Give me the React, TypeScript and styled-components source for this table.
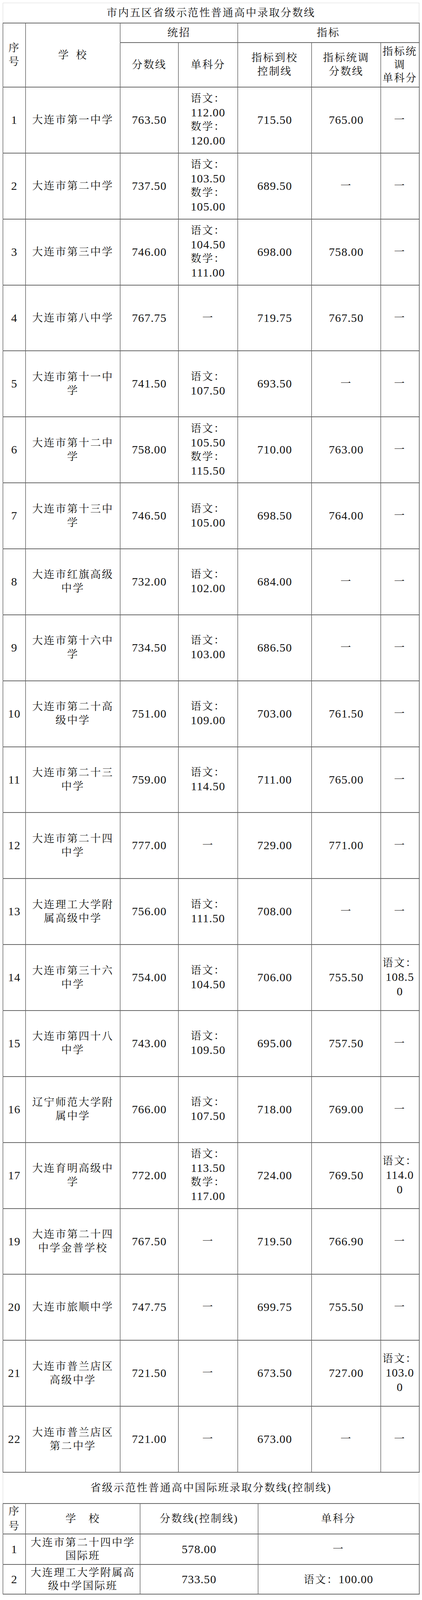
import React from "react";
import styled, { createGlobalStyle } from "styled-components";

const GlobalStyle = createGlobalStyle`
  html, body {
    margin: 0;
    padding: 0;
    background: #ffffff;
  }
  body {
    font-family: "Liberation Serif", "Noto Serif CJK SC", "Noto Sans CJK SC", serif;
    color: #111111;
  }
`;

const Page = styled.div`
  width: 1080px;
  box-sizing: border-box;
  padding: 7px 8px 9px 7px;
  font-size: 27px;
  letter-spacing: 2.7px;
`;

const Table = styled.table`
  width: 1065px;
  border-collapse: collapse;
  table-layout: fixed;
`;

const Row = styled.tr<{ $h: number }>`
  height: ${(p) => p.$h}px;
`;

const TitleCell = styled.td<{ $top?: boolean }>`
  padding: 0;
  text-align: center;
  vertical-align: middle;
  border-left: 1px solid #d6d6d6;
  border-right: 1px solid #d6d6d6;
  border-top: ${(p) => (p.$top ? "1px solid #dcdcdc" : "none")};
  border-bottom: none;
  line-height: 34px;
`;

const Cell = styled.td<{ $lh?: number }>`
  padding: 0 2px;
  text-align: center;
  vertical-align: middle;
  border-left: 1px solid #222222;
  border-right: 1px solid #222222;
  border-top: 2px solid #666666;
  border-bottom: 2px solid #666666;
  line-height: ${(p) => p.$lh ?? 35}px;
  &:last-child {
    border-right: 2px solid #777777;
  }
`;

const Line = styled.span`
  display: block;
  white-space: nowrap;
`;

const Num = styled.span`
  font-family: "Liberation Serif", serif;
  font-size: 30px;
  letter-spacing: 1.1px;
`;

const isNum = (t: string) => /^[0-9.]+$/.test(t);

const Text = ({ t }: { t: string }) => (isNum(t) ? <Num>{t}</Num> : <>{t}</>);

const Lines = ({ items }: { items: string[] }) => (
  <>
    {items.map((t, i) => (
      <Line key={i}>
        <Text t={t} />
      </Line>
    ))}
  </>
);

const D = "一";

type MainRow = {
  no: string;
  name: string[];
  score: string;
  single: string[];
  toSchool: string;
  adjust: string;
  adjustSingle: string[];
};

const Y = "语文：";
const S = "数学：";

const mainRows: MainRow[] = [
  { no: "1", name: ["大连市第一中学"], score: "763.50", single: [Y, "112.00", S, "120.00"], toSchool: "715.50", adjust: "765.00", adjustSingle: [D] },
  { no: "2", name: ["大连市第二中学"], score: "737.50", single: [Y, "103.50", S, "105.00"], toSchool: "689.50", adjust: D, adjustSingle: [D] },
  { no: "3", name: ["大连市第三中学"], score: "746.00", single: [Y, "104.50", S, "111.00"], toSchool: "698.00", adjust: "758.00", adjustSingle: [D] },
  { no: "4", name: ["大连市第八中学"], score: "767.75", single: [D], toSchool: "719.75", adjust: "767.50", adjustSingle: [D] },
  { no: "5", name: ["大连市第十一中", "学"], score: "741.50", single: [Y, "107.50"], toSchool: "693.50", adjust: D, adjustSingle: [D] },
  { no: "6", name: ["大连市第十二中", "学"], score: "758.00", single: [Y, "105.50", S, "115.50"], toSchool: "710.00", adjust: "763.00", adjustSingle: [D] },
  { no: "7", name: ["大连市第十三中", "学"], score: "746.50", single: [Y, "105.00"], toSchool: "698.50", adjust: "764.00", adjustSingle: [D] },
  { no: "8", name: ["大连市红旗高级", "中学"], score: "732.00", single: [Y, "102.00"], toSchool: "684.00", adjust: D, adjustSingle: [D] },
  { no: "9", name: ["大连市第十六中", "学"], score: "734.50", single: [Y, "103.00"], toSchool: "686.50", adjust: D, adjustSingle: [D] },
  { no: "10", name: ["大连市第二十高", "级中学"], score: "751.00", single: [Y, "109.00"], toSchool: "703.00", adjust: "761.50", adjustSingle: [D] },
  { no: "11", name: ["大连市第二十三", "中学"], score: "759.00", single: [Y, "114.50"], toSchool: "711.00", adjust: "765.00", adjustSingle: [D] },
  { no: "12", name: ["大连市第二十四", "中学"], score: "777.00", single: [D], toSchool: "729.00", adjust: "771.00", adjustSingle: [D] },
  { no: "13", name: ["大连理工大学附", "属高级中学"], score: "756.00", single: [Y, "111.50"], toSchool: "708.00", adjust: D, adjustSingle: [D] },
  { no: "14", name: ["大连市第三十六", "中学"], score: "754.00", single: [Y, "104.50"], toSchool: "706.00", adjust: "755.50", adjustSingle: [Y, "108.5", "0"] },
  { no: "15", name: ["大连市第四十八", "中学"], score: "743.00", single: [Y, "109.50"], toSchool: "695.00", adjust: "757.50", adjustSingle: [D] },
  { no: "16", name: ["辽宁师范大学附", "属中学"], score: "766.00", single: [Y, "107.50"], toSchool: "718.00", adjust: "769.00", adjustSingle: [D] },
  { no: "17", name: ["大连育明高级中", "学"], score: "772.00", single: [Y, "113.50", S, "117.00"], toSchool: "724.00", adjust: "769.50", adjustSingle: [Y, "114.0", "0"] },
  { no: "19", name: ["大连市第二十四", "中学金普学校"], score: "767.50", single: [D], toSchool: "719.50", adjust: "766.90", adjustSingle: [D] },
  { no: "20", name: ["大连市旅顺中学"], score: "747.75", single: [D], toSchool: "699.75", adjust: "755.50", adjustSingle: [D] },
  { no: "21", name: ["大连市普兰店区", "高级中学"], score: "721.50", single: [D], toSchool: "673.50", adjust: "727.00", adjustSingle: [Y, "103.0", "0"] },
  { no: "22", name: ["大连市普兰店区", "第二中学"], score: "721.00", single: [D], toSchool: "673.00", adjust: D, adjustSingle: [D] },
];

type IntlRow = { no: string; name: string[]; score: string; single: string[] };

const intlRows: IntlRow[] = [
  { no: "1", name: ["大连市第二十四中学", "国际班"], score: "578.00", single: [D] },
  { no: "2", name: ["大连理工大学附属高", "级中学国际班"], score: "733.50", single: [Y, "100.00"] },
];

const mainCols = [58, 242, 149, 152, 189, 177, 98];
const intlCols = [58, 293, 302, 412];

const ROW_H = 168.86;

export default function App() {
  return (
    <>
      <GlobalStyle />
      <Page>
        <Table>
          <colgroup>
            {mainCols.map((w, i) => (
              <col key={i} style={{ width: w }} />
            ))}
          </colgroup>
          <tbody>
            <Row $h={51.5}>
              <TitleCell $top colSpan={7}>
                市内五区省级示范性普通高中录取分数线
              </TitleCell>
            </Row>
            <Row $h={50}>
              <Cell rowSpan={2}>
                <Lines items={["序", "号"]} />
              </Cell>
              <Cell rowSpan={2}>学{"\u2002"}校</Cell>
              <Cell colSpan={2}>统招</Cell>
              <Cell colSpan={3}>指标</Cell>
            </Row>
            <Row $h={114}>
              <Cell>分数线</Cell>
              <Cell>单科分</Cell>
              <Cell>
                <Lines items={["指标到校", "控制线"]} />
              </Cell>
              <Cell>
                <Lines items={["指标统调", "分数线"]} />
              </Cell>
              <Cell $lh={34}>
                <Lines items={["指标统", "调", "单科分"]} />
              </Cell>
            </Row>
            {mainRows.map((r) => (
              <Row $h={ROW_H} key={r.no}>
                <Cell>
                  <Num>{r.no}</Num>
                </Cell>
                <Cell>
                  <Lines items={r.name} />
                </Cell>
                <Cell>
                  <Text t={r.score} />
                </Cell>
                <Cell>
                  <Lines items={r.single} />
                </Cell>
                <Cell>
                  <Text t={r.toSchool} />
                </Cell>
                <Cell>
                  <Text t={r.adjust} />
                </Cell>
                <Cell>
                  <Lines items={r.adjustSingle} />
                </Cell>
              </Row>
            ))}
          </tbody>
        </Table>
        <Table>
          <colgroup>
            {intlCols.map((w, i) => (
              <col key={i} style={{ width: w }} />
            ))}
          </colgroup>
          <tbody>
            <Row $h={79}>
              <TitleCell colSpan={4}>
                省级示范性普通高中国际班录取分数线(控制线)
              </TitleCell>
            </Row>
            <Row $h={76}>
              <Cell $lh={38}>
                <Lines items={["序", "号"]} />
              </Cell>
              <Cell>学{"\u2003"}校</Cell>
              <Cell>分数线(控制线)</Cell>
              <Cell>单科分</Cell>
            </Row>
            {intlRows.map((r, i) => (
              <Row $h={i === 0 ? 78 : 76} key={r.no}>
                <Cell $lh={34}>
                  <Num>{r.no}</Num>
                </Cell>
                <Cell $lh={34}>
                  <Lines items={r.name} />
                </Cell>
                <Cell $lh={34}>
                  <Text t={r.score} />
                </Cell>
                <Cell $lh={34}>
                  {r.single.map((t, k) => (
                    <Text t={t} key={k} />
                  ))}
                </Cell>
              </Row>
            ))}
          </tbody>
        </Table>
      </Page>
    </>
  );
}
